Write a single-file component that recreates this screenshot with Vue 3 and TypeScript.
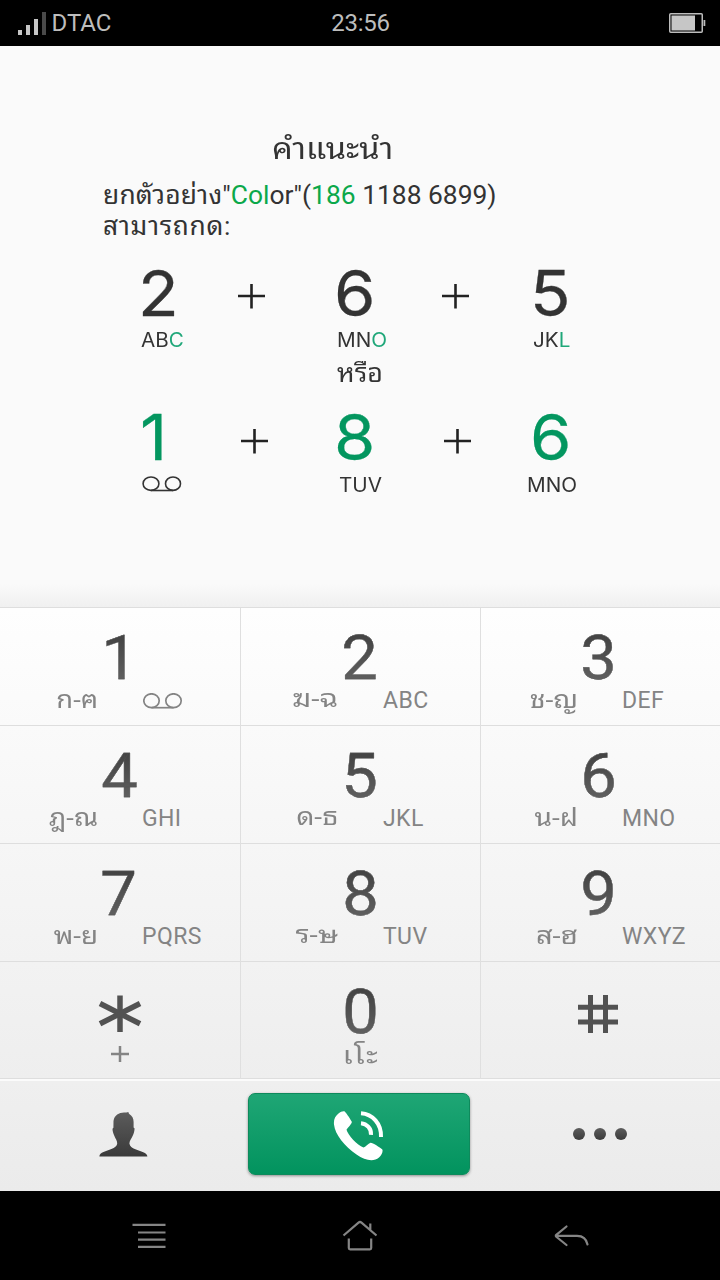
<script setup lang="ts">
interface Key {
  digit: string
  thai?: string
  latin?: string
  stretch?: number
  shift?: number
  center?: string
}

interface Sample {
  digit: string
  dark: string
  green: string
  pad?: number
}

const keys: Key[] = [
  { digit: '1', thai: 'ก-ฅ', latin: 'vm', shift: -0.5, stretch: 1.14 },
  { digit: '2', thai: 'ฆ-ฉ', latin: 'ABC', shift: -1, stretch: 1.24 },
  { digit: '3', thai: 'ช-ญ', latin: 'DEF', shift: -2, stretch: 1.18 },
  { digit: '4', thai: 'ฎ-ณ', latin: 'GHI', shift: -1, stretch: 1.14 },
  { digit: '5', thai: 'ด-ธ', latin: 'JKL', shift: -1, stretch: 1.17 },
  { digit: '6', thai: 'น-ฝ', latin: 'MNO', shift: -2, stretch: 1.17 },
  { digit: '7', thai: 'พ-ย', latin: 'PQRS', shift: -1.5, stretch: 1.16 },
  { digit: '8', thai: 'ร-ษ', latin: 'TUV', shift: -0.5, stretch: 1.24 },
  { digit: '9', thai: 'ส-ฮ', latin: 'WXYZ', shift: -2.5, stretch: 1.21 },
  { digit: '*', center: '+' },
  { digit: '0', center: 'เโะ', shift: -0.5 },
  { digit: '#' },
]

const byLetters: Sample[] = [
  { digit: '2', dark: 'AB', green: 'C' },
  { digit: '6', dark: 'MN', green: 'O' },
  { digit: '5', dark: 'JK', green: 'L' },
]

const byNumber: Sample[] = [
  { digit: '1', dark: 'vm', green: '' },
  { digit: '8', dark: 'TUV', green: '', pad: 2 },
  { digit: '6', dark: 'MNO', green: '', pad: -6 },
]
</script>

<template>
  <div class="phone">
    <header class="status">
      <div class="carrier">
        <svg width="28" height="23" viewBox="0 0 28 23">
          <path d="M0 18h4v5H0zM8 13h4v10H8zM16 7h4v16h-4z" fill="#c6c6c6" />
          <path d="M24 0h4v23h-4z" fill="#4a4a4a" />
        </svg>
        <span>DTAC</span>
      </div>
      <span class="clock">23:56</span>
      <svg class="battery" width="37" height="20" viewBox="0 0 37 20">
        <rect x=".75" y=".75" width="32.5" height="18.5" rx="1" fill="#000" stroke="#bdbdbd" stroke-width="1.5" />
        <rect x="2.5" y="2.5" width="23.5" height="15" fill="#c6c6c6" />
        <path d="M34.5 7h1.8v6h-1.8z" fill="#bdbdbd" />
      </svg>
    </header>

    <main class="guide">
      <h1><span>คำแนะนำ</span></h1>
      <p class="intro">
        <span class="lead">ยกตัวอย่าง</span>"<b>Col</b>or"(<b>186</b> 1188 6899)<br /><span class="can">สามารถกด:</span>
      </p>

      <div class="samples">
        <template v-for="(s, i) in byLetters" :key="s.digit">
          <svg v-if="i" class="plus" :class="'plus' + i" width="27" height="26" viewBox="0 0 27 26">
            <path d="M0 13h27M13.5 1v24.500" />
          </svg>
          <div class="sample">
            <span class="big">{{ s.digit }}</span>
            <span class="small">{{ s.dark }}<i>{{ s.green }}</i></span>
          </div>
        </template>
      </div>
      <p class="or"><span>หรือ</span></p>
      <div class="samples green">
        <template v-for="(s, i) in byNumber" :key="s.digit">
          <svg v-if="i" class="plus" :class="'plus' + i" width="27" height="26" viewBox="0 0 27 26">
            <path d="M0 13h27M13.5 1v24.500" />
          </svg>
          <div class="sample">
            <span class="big">{{ s.digit }}</span>
            <svg v-if="s.dark === 'vm'" class="vm" width="40" height="16" viewBox="0 0 40 16">
              <g fill="none" stroke="#333" stroke-width="1.6">
                <ellipse cx="9" cy="7.700" rx="7.900" ry="6.700" />
                <ellipse cx="31" cy="7.700" rx="7.500" ry="6.700" />
                <path d="M9 14.500h22" />
              </g>
            </svg>
            <span v-else class="small" :style="{ marginLeft: (s.pad ?? 0) + 'px' }">{{ s.dark }}</span>
          </div>
        </template>
      </div>
    </main>

    <section class="keypad">
      <button v-for="k in keys" :key="k.digit" class="key" type="button">
        <svg v-if="k.digit === '*'" class="symbol" width="44" height="40" viewBox="0 0 44 40" aria-label="*">
          <g stroke="#525252" stroke-width="5.500">
            <line x1="22" y1="1.500" x2="22" y2="38" />
            <line x1="2" y1="9.500" x2="42" y2="29.800" />
            <line x1="42" y1="9.500" x2="2" y2="29.800" />
          </g>
        </svg>
        <svg v-else-if="k.digit === '#'" class="symbol hash" width="44" height="40" viewBox="0 0 44 40" aria-label="#">
          <g stroke="#525252" stroke-width="5">
            <line x1="2" y1="13.200" x2="42" y2="13.200" />
            <line x1="2" y1="28" x2="42" y2="28" />
            <line x1="14.500" y1="1" x2="14.500" y2="39" />
            <line x1="29.500" y1="1" x2="29.500" y2="39" />
          </g>
        </svg>
        <span v-else class="digit" :style="{ marginLeft: (k.shift ?? 0) * 2 + 'px' }">{{ k.digit }}</span>
        <span v-if="k.thai" class="letters">
          <span class="thai" :style="{ transform: `scaleX(${k.stretch ?? 1})` }">{{ k.thai }}</span>
          <svg v-if="k.latin === 'vm'" class="vm" width="40" height="16" viewBox="0 0 40 16">
            <g fill="none" stroke="#848484" stroke-width="1.700">
              <ellipse cx="8.500" cy="7.700" rx="7.700" ry="6.900" />
              <ellipse cx="30.500" cy="7.700" rx="7.700" ry="6.900" />
              <path d="M8.500 14.700h22" />
            </g>
          </svg>
          <span v-else class="latin">{{ k.latin }}</span>
        </span>
        <svg v-else-if="k.center === '+'" class="subplus" width="18" height="16" viewBox="0 0 18 16">
          <path d="M0 8h18M9 0v16" stroke="#848484" stroke-width="2.500" />
        </svg>
        <span v-else-if="k.center" class="center">{{ k.center }}</span>
      </button>
    </section>

    <section class="actions">
      <svg width="49" height="45" viewBox="0 0 49 45">
        <defs>
          <linearGradient id="ink" x1="0" y1="0" x2="0" y2="1">
            <stop offset="0" stop-color="#5c5c5c" />
            <stop offset="1" stop-color="#3a3a3a" />
          </linearGradient>
        </defs>
        <path
          fill="url(#ink)"
          d="M14.500 9C15.500 3 20 .8 25 .6c2 0 3-.2 4.300-.6l.7 1.700c3.300 2 4.600 4.800 4.600 8.300v5.600l1 .8c-.2 3-.8 5-2 7.500-1.300 3-3 4.500-3.200 7.500.5 3 2.500 4.400 6 5.800 5 2 12 3.300 12 7.300H.4c0-4.200 7-5.500 12-7.500 3.500-1.400 5.200-2.700 5.800-5.300.2-3-1.700-4.700-2.900-8-1-2.500-1.800-4.400-1.800-7l.9-.9z"
        />
      </svg>
      <button class="call" type="button">
        <svg width="52" height="52" viewBox="0 0 52 52">
          <path
            fill="#fff"
            d="M5.500 3.400C8 1.400 10.800.6 12 1.700c1.800 2 5.500 7.500 6.800 10.100.5 1.500-4.200 6.200-5.300 8 1.200 5 10.700 15.500 17 17.700 1.900-.5 4.800-4 7-4.800 2-.2 9.300 4.500 11.800 6.700 1 1.800-.7 6-3.300 8.200-5.500 4.600-14 3-22.500-3.100C11.500 36 2.200 25 1 14.500.5 9.500 2 6.200 5.500 3.400z"
          />
          <g fill="none" stroke="#fff" stroke-width="4">
            <path d="M28 3.200C39.500 4 48.500 13.500 48 27" />
            <path d="M28 13.200c6 .5 10.500 5.500 10 11.600" />
          </g>
        </svg>
      </button>
      <div class="dots"><span /><span /><span /></div>
    </section>

    <nav class="nav">
      <svg width="34" height="26" viewBox="0 0 34 26">
        <path d="M.5 1.800h33M6 9.500h27.500M6 16.700h27.500M6 23.900h27.500" />
      </svg>
      <svg width="36" height="32" viewBox="0 0 36 32">
        <path d="M1.500 15.500 16.500 2.600q1.500-1.200 3 0L34.500 15.500M28.300 3.500v6M6.800 18.500V28q0 1.300 1.300 1.300h19.800q1.300 0 1.300-1.300v-9.500" />
      </svg>
      <svg width="36" height="24" viewBox="0 0 36 24">
        <path d="M12.500 2.500 2.300 10.800q-1 1 0 2L12.500 21M2.500 11.800h20.500c6 0 9.500 3.500 10.500 8.700" stroke-linecap="round" />
      </svg>
    </nav>
  </div>
</template>

<style>
body {
  margin: 0;
}
</style>

<style scoped>
.phone {
  width: 720px;
  height: 1280px;
  display: flex;
  flex-direction: column;
  overflow: hidden;
  background: #fafafa;
  color: #333;
  font-family: Roboto, 'Noto Sans Thai Looped', 'Noto Looped Thai', Loma, Waree, Garuda, 'Noto Sans', sans-serif;
}
.status {
  height: 46px;
  flex: none;
  box-sizing: border-box;
  padding: 0 14px 0 18px;
  display: grid;
  grid-template-columns: 1fr auto 1fr;
  align-items: center;
  background: #000;
  color: #bdbdbd;
  font-size: 24px;
  line-height: 46px;
}
.carrier {
  display: flex;
  align-items: center;
  gap: 5.500px;
}
.clock {
  padding-right: 3px;
  letter-spacing: -0.300px;
}
.battery {
  justify-self: end;
}
.guide {
  height: 561px;
  flex: none;
  background: linear-gradient(#fafafa 0 538px, #f0f0f0);
}
h1 {
  margin: 0;
  padding: 83px 0 0 271.500px;
  font-size: 29.500px;
  font-weight: 400;
  line-height: 40px;
}
h1 span {
  display: inline-block;
  transform: scaleX(1.105);
  transform-origin: left;
}
.intro {
  margin: 11px 0 0 103px;
  font-size: 26.400px;
  line-height: 30.500px;
}
.intro b {
  font-weight: 400;
  color: #0ba84a;
}
.lead {
  letter-spacing: 0.180px;
}
.can {
  letter-spacing: 0.650px;
}
.samples {
  display: grid;
  grid-template-columns: 84px 112px 85px 111px 60px;
  margin: 21px 0 0 141px;
  height: 90px;
}
.sample {
  display: flex;
  flex-direction: column;
  align-items: flex-start;
  white-space: nowrap;
}
.big {
  height: 62px;
  margin-left: -3.500px;
  font: 400 63px/62px Inter, sans-serif;
  -webkit-text-stroke: 0.300px;
  transform: scaleX(1.06);
  transform-origin: left;
}
.small {
  height: 24px;
  margin-top: 4px;
  font: 400 19.500px/24px Inter, sans-serif;
  transform: scaleX(1.06);
  transform-origin: left;
}
.small i {
  font-style: normal;
  color: #1fa779;
}
.plus {
  margin: 21px 0 0 13px;
  fill: none;
  stroke: #222;
  stroke-width: 2.600;
}
.plus2 {
  margin-left: 20px;
}
.or {
  margin: 5px 0 0 336.500px;
  font-size: 26px;
  line-height: 32px;
}
.or span {
  display: inline-block;
  transform: scaleX(1.03);
  transform-origin: left;
}
.green .big {
  color: #03965f;
}
.green .sample:first-child .big {
  margin-left: -1.500px;
}
.green .small {
  margin-top: 5px;
}
.guide .vm {
  margin: 8px 0 0 1px;
}
.green {
  margin-top: 17px;
}
.green .plus {
  margin: 22px 0 0 16px;
}
.green .plus2 {
  margin-left: 22px;
}
.keypad {
  height: 472px;
  flex: none;
  box-sizing: border-box;
  border-top: 1px solid #dedede;
  display: grid;
  grid-template-columns: 241px 240px 239px;
  grid-template-rows: repeat(3, 118px) 117px;
  background: linear-gradient(#fefefe, #eee);
}
.key {
  border: 0;
  border-right: 1px solid #dfdfdf;
  border-bottom: 1px solid #dedede;
  padding: 0;
  background: none;
  display: flex;
  flex-direction: column;
  align-items: center;
  font-family: inherit;
  color: #848484;
}
.key:nth-child(3n) {
  border-right: 0;
}
.digit {
  height: 62px;
  margin-top: 19px;
  font-size: 62px;
  line-height: 62px;
  transform: scaleX(1.05);
  color: transparent;
  background: linear-gradient(#444 10px, #606060 54px);
  background-clip: text;
  -webkit-text-stroke: 0.300px #555;
}
.letters {
  align-self: stretch;
  display: grid;
  grid-template-columns: 97px 1fr;
  column-gap: 45px;
  margin-top: -1px;
  font-size: 23px;
  line-height: 26px;
  text-align: left;
}
.latin {
  letter-spacing: 0.400px;
}
.key:nth-child(3n) .letters {
  margin-left: -1px;
}
.thai {
  margin: -1px -1px 0 0;
  text-align: right;
  font-size: 24px;
  transform-origin: right;
}
.key:nth-child(3n + 2) .thai {
  margin: -2px 0 0;
}
.letters .vm {
  margin: 5px 0 0 1px;
}
.symbol {
  margin-top: 32px;
}
.hash {
  margin-right: 6px;
}
.subplus {
  margin-top: 12px;
}
.center {
  font-size: 24px;
  line-height: 26px;
  letter-spacing: 1px;
  transform: scaleX(1.22);
}
.actions {
  height: 112px;
  flex: none;
  box-sizing: border-box;
  border-top: 2px solid #fbfbfb;
  padding: 0 93px 4px 99px;
  display: flex;
  align-items: center;
  justify-content: space-between;
  background: linear-gradient(#efefef, #ebebeb);
}
.call {
  width: 222px;
  height: 82px;
  margin-left: -3px;
  border: 1px solid #0e8a5c;
  border-radius: 7px;
  padding: 3px 0 0;
  box-sizing: border-box;
  display: flex;
  align-items: center;
  justify-content: center;
  background: linear-gradient(#1fa675, #02935e);
  box-shadow: 0 1px 3px #0006;
}
.dots {
  display: flex;
  gap: 9px;
}
.dots span {
  width: 12px;
  height: 12px;
  border-radius: 50%;
  background: linear-gradient(#5c5c5c, #3c3c3c);
}
.nav {
  flex: 1;
  padding: 0 130px 0 132px;
  display: flex;
  align-items: center;
  justify-content: space-between;
  background: #000;
}
.nav svg {
  fill: none;
  stroke: #858585;
  stroke-width: 2.200;
}
</style>
